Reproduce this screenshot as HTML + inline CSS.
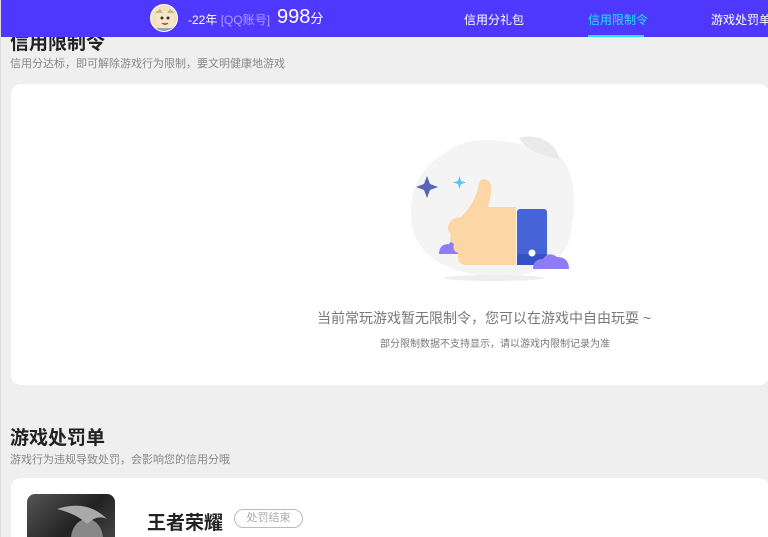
<!DOCTYPE html>
<html><head><meta charset="utf-8"><style>
*{margin:0;padding:0;box-sizing:border-box}
html,body{width:768px;height:537px;overflow:hidden}
body{background:#efefef;font-family:"Liberation Sans","Noto Sans CJK SC",sans-serif;position:relative;border-left:1px solid #ddd}
.hdr{position:absolute;left:0;top:0;width:768px;height:37px;background:#4f38fd;z-index:2}
.av{position:absolute;left:149px;top:4px;width:28px;height:28px;border-radius:50%;background:#f1e2bf;border:1px solid #fff;overflow:hidden}
.t{position:absolute;white-space:nowrap}
h2{position:absolute;font-size:19px;font-weight:bold;color:#222}
.sub{font-size:11px;color:#888}
.card{position:absolute;left:10px;background:#fff;border-radius:10px;width:758px;overflow:hidden}
</style></head><body>
<div class="hdr">
 <div class="av"><svg width="28" height="28"><circle cx="14" cy="15" r="9" fill="#f6e7c8"/><circle cx="11" cy="13" r="1.5" fill="#333"/><circle cx="17" cy="13" r="1.5" fill="#333"/><path d="M11 18 q3 3 6 0" stroke="#a44" fill="#d55"/><path d="M4 8 l5 -4 l3 4 z M24 8 l-5 -4 l-3 4z" fill="#c9b38a"/><rect x="6" y="23" width="16" height="4" fill="#8ab"/></svg></div>
 <div class="t" style="left:187px;top:11px;font-size:12px;color:#fff">-22年 <span style="color:#a9a0ff">[QQ账号]</span></div>
 <div class="t" style="left:276px;top:6px;font-size:20px;color:#fff">998<span style="font-size:13px">分</span></div>
 <div class="t" style="left:463px;top:11px;font-size:12px;color:#fff">信用分礼包</div>
 <div class="t" style="left:587px;top:11px;font-size:12px;color:#22e6f0">信用限制令</div>
 <div style="position:absolute;left:587px;top:35px;width:56px;height:2px;background:#22e6f0"></div>
 <div class="t" style="left:710px;top:11px;font-size:12px;color:#fff">游戏处罚单</div>
</div>
<h2 style="left:9px;top:28px">信用限制令</h2>
<div class="t sub" style="left:9px;top:55px">信用分达标，即可解除游戏行为限制，要文明健康地游戏</div>
<div class="card" style="top:84px;height:301px">
 <svg style="position:absolute;left:398px;top:46px" width="170" height="160" viewBox="0 0 170 160">
  <path d="M40 20 C70 0 110 15 140 20 C170 30 168 80 160 110 C150 145 100 150 70 145 C30 140 0 120 2 80 C4 50 15 35 40 20Z" fill="#f4f4f5"/>
  <path d="M110 8 C130 2 150 15 150 30 C140 25 120 25 110 8Z" fill="#eaeaec"/>
  <ellipse cx="85" cy="148" rx="50" ry="3" fill="#eee"/>
  <path d="M15 54 l3 -8 l3 8 l8 3 l-8 3 l-3 8 l-3 -8 l-8 -3z" fill="#5864b8"/>
  <path d="M49 51 l1.5 -5 l1.5 5 l5 1.5 l-5 1.5 l-1.5 5 l-1.5 -5 l-5 -1.5z" fill="#5bc4f0"/>
  <path d="M30 124 q0 -10 10 -10 q5 -8 14 -2 q8 0 8 12z" fill="#8f7cf5"/>
  <path d="M70 54 q2 -8 10 -3 q5 6 -1 26 h28 v58 h-50 q-8 0 -8 -8 v-4 q-6 -2 -4 -9 q-6 -3 -3 -10 q-5 -4 -2 -10 q2 -6 12 -7 q14 -13 18 -33z" fill="#fcd6a4"/>
  <rect x="108" y="79" width="30" height="56" rx="3" fill="#4664d8"/>
  <rect x="108" y="124" width="30" height="11" fill="#3551c5"/>
  <circle cx="123" cy="123" r="3.5" fill="#fff"/>
  <path d="M124 139 q0 -10 10 -10 q5 -8 14 -2 q12 0 12 12z" fill="#8f7cf5"/>
 </svg>
 <div class="t" style="left:306px;top:224px;font-size:14px;color:#777">当前常玩游戏暂无限制令，您可以在游戏中自由玩耍 ~</div>
 <div class="t" style="left:369px;top:251px;font-size:10px;color:#777">部分限制数据不支持显示，请以游戏内限制记录为准</div>
</div>
<h2 style="left:9px;top:423px">游戏处罚单</h2>
<div class="t sub" style="left:9px;top:451px">游戏行为违规导致处罚，会影响您的信用分哦</div>
<div class="card" style="top:478px;height:59px;border-radius:10px 10px 0 0">
 <div style="position:absolute;left:16px;top:16px;width:88px;height:43px;border-radius:8px 8px 0 0;background:linear-gradient(135deg,#555,#222 60%,#444);overflow:hidden"><svg width="88" height="43"><ellipse cx="60" cy="45" rx="16" ry="20" fill="#888"/><path d="M30 15 q30 -10 50 10 q-10 -5 -20 5 q-10 -10 -30 -15z" fill="#aaa"/></svg></div>
 <div class="t" style="left:136px;top:30px;font-size:19px;font-weight:bold;color:#222">王者荣耀</div>
 <div class="t" style="left:223px;top:31px;width:69px;height:19px;border:1px solid #bbb;border-radius:10px;font-size:11px;color:#aaa;text-align:center;line-height:17px">处罚结束</div>
</div>
</body></html>
